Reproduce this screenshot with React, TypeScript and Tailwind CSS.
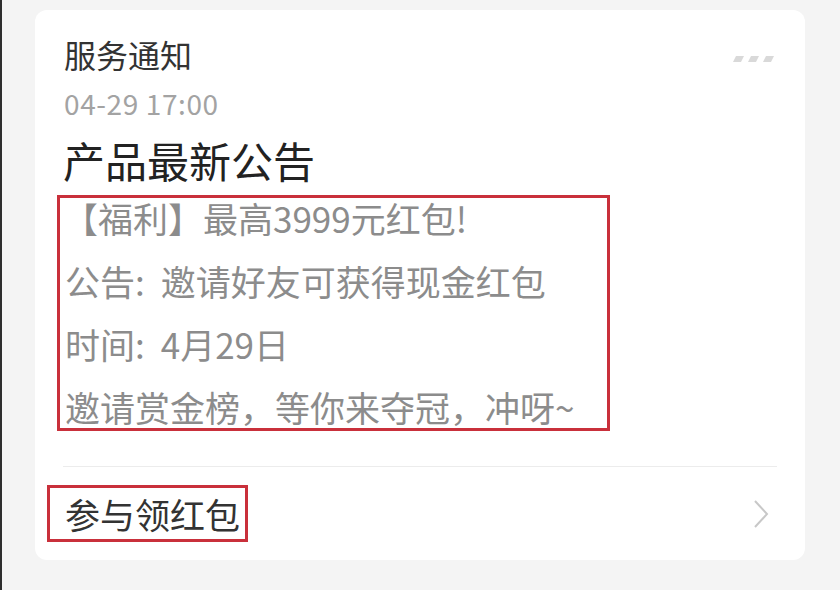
import React from "react";

const font = { fontFamily: '"Noto Sans CJK SC", "Noto Sans", sans-serif' };

export default function App() {
  return (
    <div
      className="w-[840px] h-[590px] bg-[#f4f4f4] border-l-2 border-[#2e2e2e] pl-[33px] pt-[10px] overflow-hidden"
      style={font}
    >
      <div className="w-[770px] h-[550px] rounded-[12px] bg-white px-[28px] pt-[24px] flex flex-col">
        <div className="flex justify-between items-start">
          <div className="text-[32px] leading-[40px] text-[#333] pl-[1px]">服务通知</div>
          <svg width="44" height="8" viewBox="0 0 44 8" className="mt-[22px]">
            <polygon points="3,0 11,0 8,6 0,6" fill="#d9d9d9" />
            <polygon points="18,0 26,0 23,6 15,6" fill="#d9d9d9" />
            <polygon points="33,0 41,0 38,6 30,6" fill="#d9d9d9" />
          </svg>
        </div>
        <div className="mt-[14px] text-[28px] leading-[30px] text-[#a3a3a3] pl-[1px] tracking-[0.6px]">04-29 17:00</div>
        <div className="mt-[17px] text-[42px] leading-[50px] text-[#222]">产品最新公告</div>
        <div className="mt-[10px] -ml-[6px] w-[553px] h-[236px] border-[3px] border-[#c9303b] pl-[5px] overflow-visible">
          <div className="-mt-[12px] text-[35px] leading-[63px] text-[#8c8c8c] whitespace-nowrap">
            <div className="-ml-[2px]">【福利】最高3999元红包!</div>
            <div>公告:<span className="ml-[16px]">邀请好友可获得现金红包</span></div>
            <div>时间:<span className="ml-[16px]">4月29日</span></div>
            <div>邀请赏金榜，等你来夺冠，冲呀~</div>
          </div>
        </div>
        <div className="mt-[35px] h-px bg-[#ececec]" />
        <div className="h-[93px] flex items-center justify-between">
          <div className="-ml-[16px] h-[57px] border-[3px] border-[#c9303b] pl-[15px] pr-[5px] flex items-center">
            <span className="text-[35px] leading-[40px] text-[#333]">参与领红包</span>
          </div>
          <svg width="18" height="30" viewBox="0 0 18 30" className="mr-[7px]">
            <polyline points="3,2 15,15 3,28" fill="none" stroke="#c8c8c8" strokeWidth="2" />
          </svg>
        </div>
      </div>
    </div>
  );
}
